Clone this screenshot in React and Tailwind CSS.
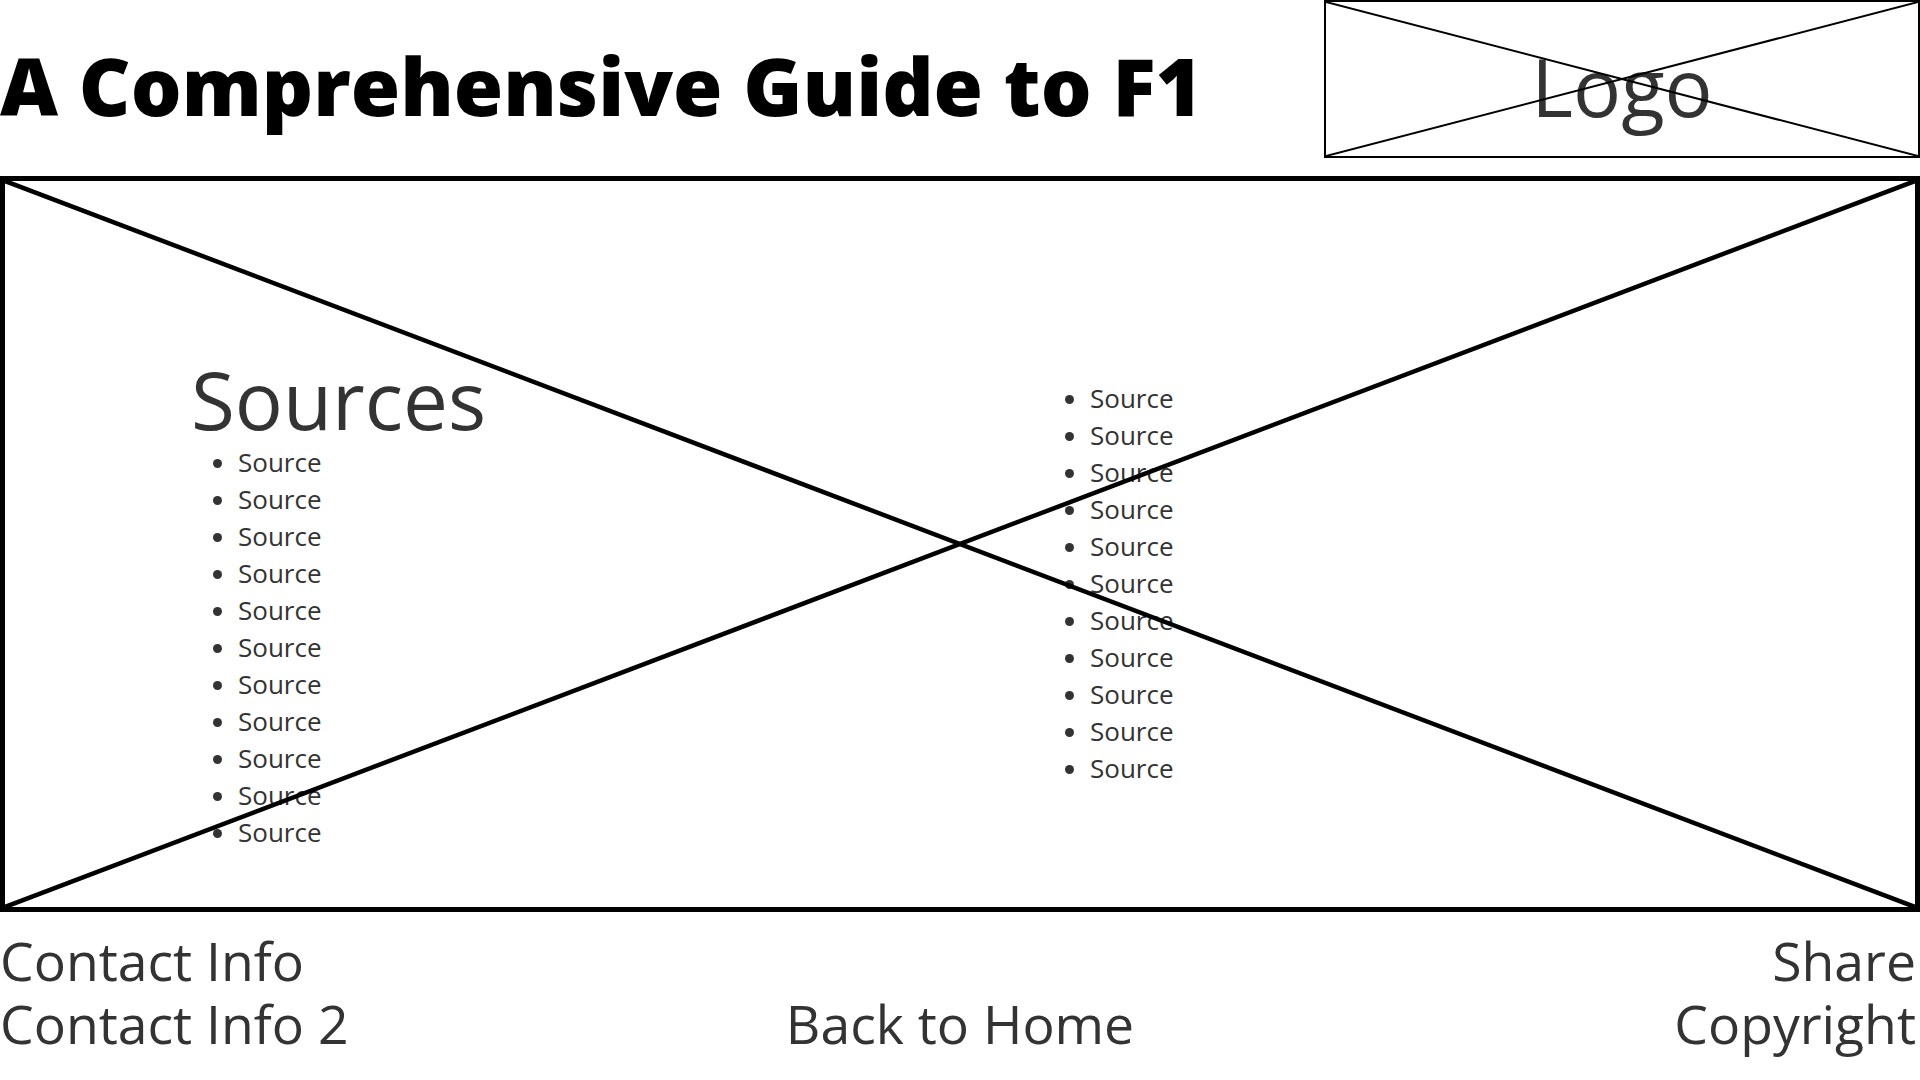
import React from 'react';

const CrossLines = ({ width = 4 }) => (
  <svg
    className="absolute inset-0 w-full h-full pointer-events-none"
    viewBox="0 0 100 100"
    preserveAspectRatio="none"
  >
    <line x1="0" y1="0" x2="100" y2="100" stroke="#000" strokeWidth={width} vectorEffect="non-scaling-stroke" />
    <line x1="0" y1="100" x2="100" y2="0" stroke="#000" strokeWidth={width} vectorEffect="non-scaling-stroke" />
  </svg>
);

const SourceList = ({ className = '' }) => (
  <ul className={`list-disc text-[26px] leading-[37px] text-[#333] ${className}`}>
    {Array.from({ length: 11 }).map((_, i) => (
      <li key={i}>Source</li>
    ))}
  </ul>
);

const App = () => {
  return (
    <div className="w-full h-[1080px] bg-white overflow-hidden font-['Open_Sans',sans-serif]">
      <header className="flex justify-between h-[176px]">
        <h1 className="pt-[45px] text-[80px] leading-none font-extrabold text-black whitespace-nowrap">
          A Comprehensive Guide to F1
        </h1>
        <div className="relative w-[596px] h-[158px] border-2 border-black flex justify-center pt-[44px]">
          <span className="text-[80px] leading-none text-[#333]">Logo</span>
          <CrossLines width={2} />
        </div>
      </header>

      <main className="relative h-[736px] border-[5px] border-black flex">
        <div className="w-[1045px] shrink-0 pl-[186px] pt-[178px]">
          <h2 className="text-[80px] leading-none text-[#333]">Sources</h2>
          <SourceList className="mt-[5px] pl-[47px]" />
        </div>
        <div className="pt-[199px]">
          <SourceList className="pl-[40px]" />
        </div>
        <CrossLines width={4.5} />
      </main>

      <footer className="grid grid-cols-3 pt-[17px] text-[53.5px] leading-[63px] text-[#333]">
        <div className="flex flex-col">
          <span>Contact Info</span>
          <span>Contact Info 2</span>
        </div>
        <div className="flex flex-col justify-end items-center">
          <span>Back to Home</span>
        </div>
        <div className="flex flex-col items-end pr-[4px]">
          <span>Share</span>
          <span>Copyright</span>
        </div>
      </footer>
    </div>
  );
};

export default App;
